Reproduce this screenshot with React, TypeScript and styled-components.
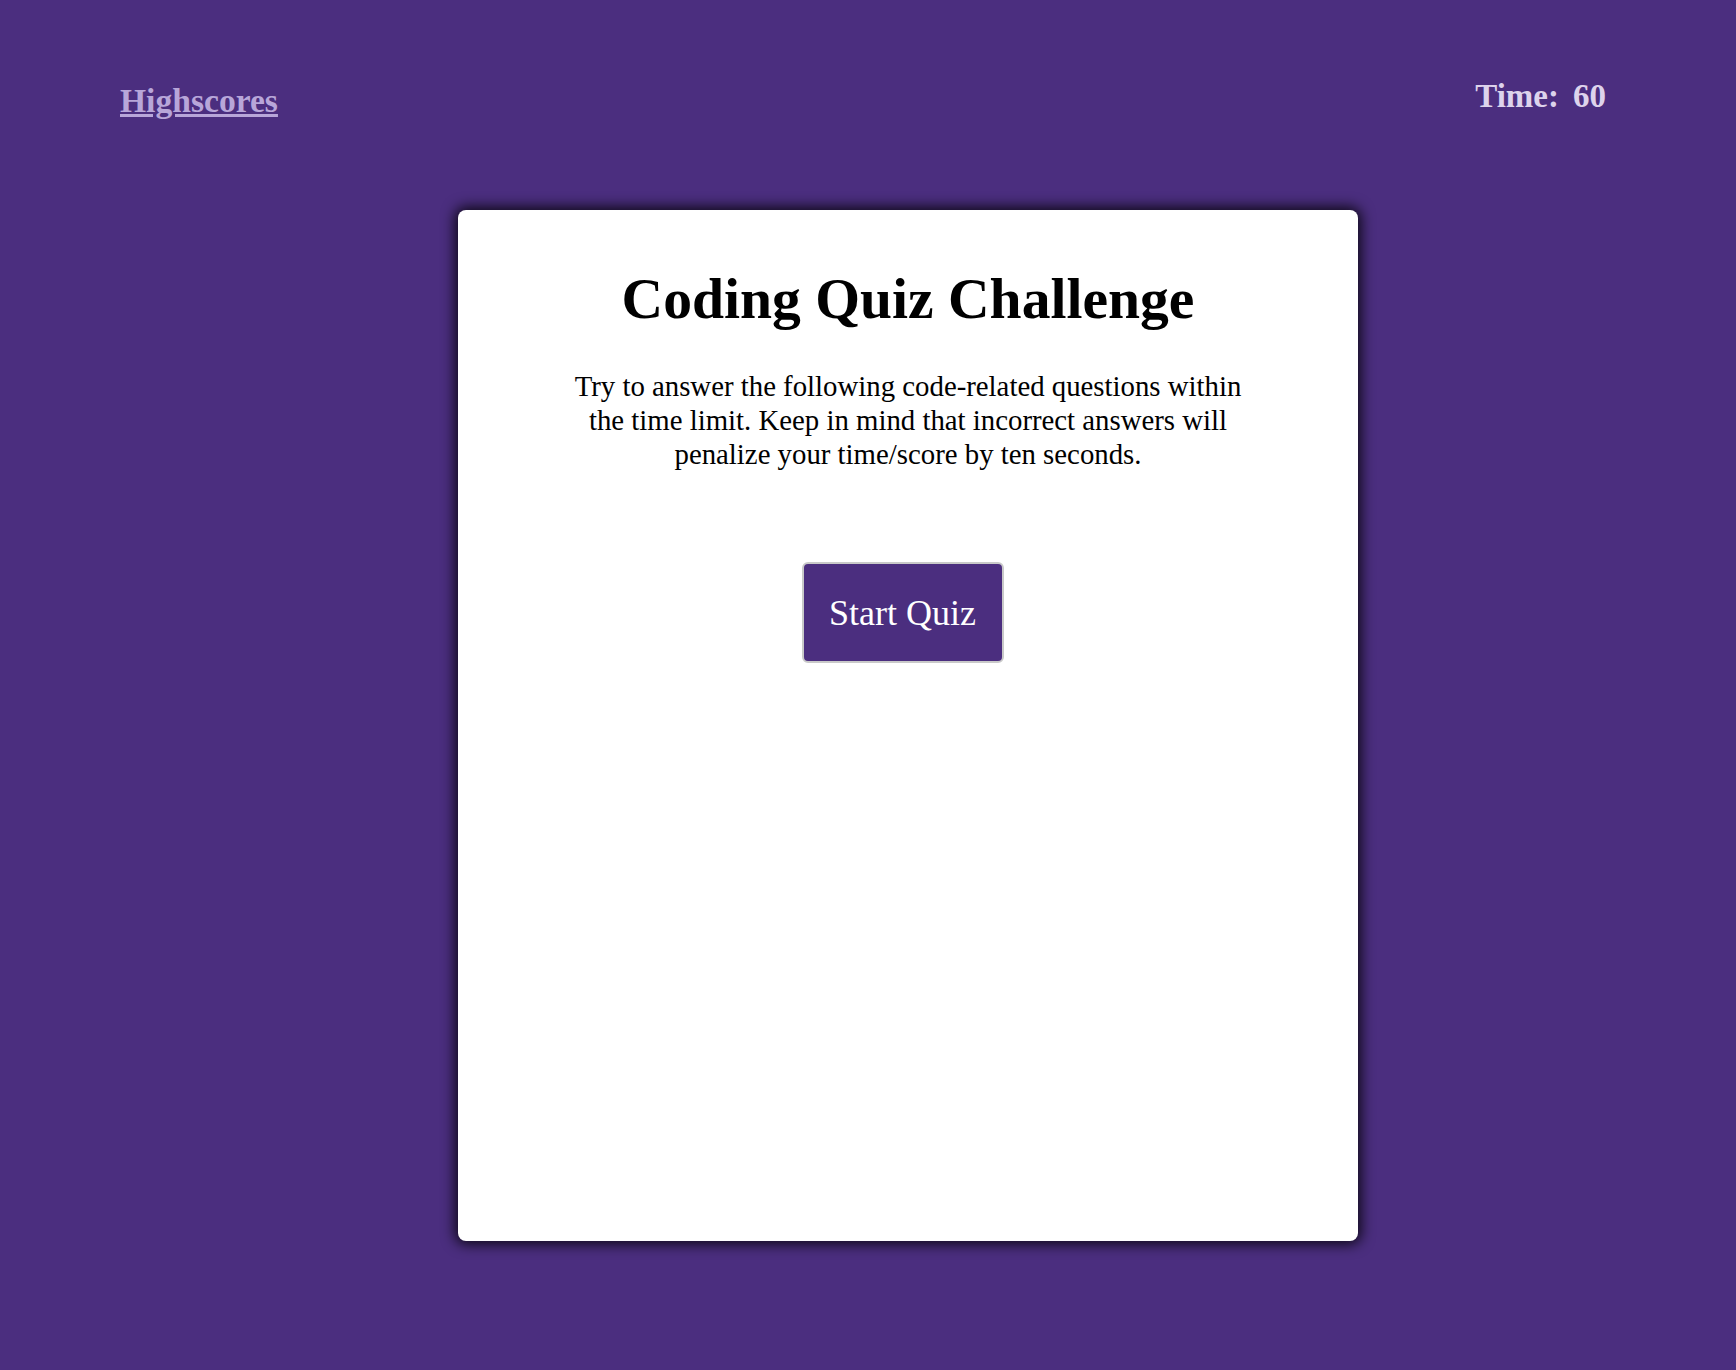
import React from 'react'
import styled, { createGlobalStyle } from 'styled-components'

const purple = '#4b2e7f'

const GlobalStyle = createGlobalStyle`
  html, body {
    margin: 0;
    padding: 0;
    background: ${purple};
    font-family: "Liberation Serif", "Times New Roman", serif;
  }
`

const Page = styled.div`
  min-height: 1370px;
  display: flex;
  flex-direction: column;
`

const Header = styled.header`
  display: flex;
  justify-content: space-between;
  align-items: flex-start;
  padding: 80px 130px 0 120px;
`

const ScoresLink = styled.a`
  margin-top: 4px;
  font-size: 33.6px;
  line-height: 1;
  font-weight: 700;
  color: #b8a6d9;
  text-decoration: underline;
  cursor: pointer;
`

const Timer = styled.div`
  display: flex;
  gap: 14px;
  font-size: 33px;
  line-height: 1;
  font-weight: 700;
  color: #ddd3ec;
`

const Card = styled.main`
  width: 900px;
  height: 1031px;
  box-sizing: border-box;
  margin: 92px 0 0 458px;
  padding-top: 60px;
  background: #fff;
  border-radius: 8px;
  box-shadow: 0 0 14px 3px rgba(0, 0, 0, 0.85);
  display: flex;
  flex-direction: column;
  align-items: center;
`

const Title = styled.h1`
  margin: 0;
  font-size: 57.6px;
  line-height: 1;
  font-weight: 700;
  color: #000;
`

const Intro = styled.p`
  margin: 42px 0 0;
  max-width: 680px;
  font-size: 28.8px;
  line-height: 34px;
  text-align: center;
  color: #000;
`

const StartButton = styled.button`
  margin: 91px 11px 0 0;
  width: 202px;
  height: 101px;
  background: ${purple};
  color: #fff;
  border: 2px solid #c9c9c9;
  border-radius: 6px;
  font-family: inherit;
  font-size: 36px;
  cursor: pointer;
`

export default function App() {
  return (
    <Page>
      <GlobalStyle />
      <Header>
        <ScoresLink>Highscores</ScoresLink>
        <Timer>
          <span>Time:</span>
          <span>60</span>
        </Timer>
      </Header>
      <Card>
        <Title>Coding Quiz Challenge</Title>
        <Intro>
          Try to answer the following code-related questions within the time limit. Keep in mind
          that incorrect answers will penalize your time/score by ten seconds.
        </Intro>
        <StartButton>Start Quiz</StartButton>
      </Card>
    </Page>
  )
}
